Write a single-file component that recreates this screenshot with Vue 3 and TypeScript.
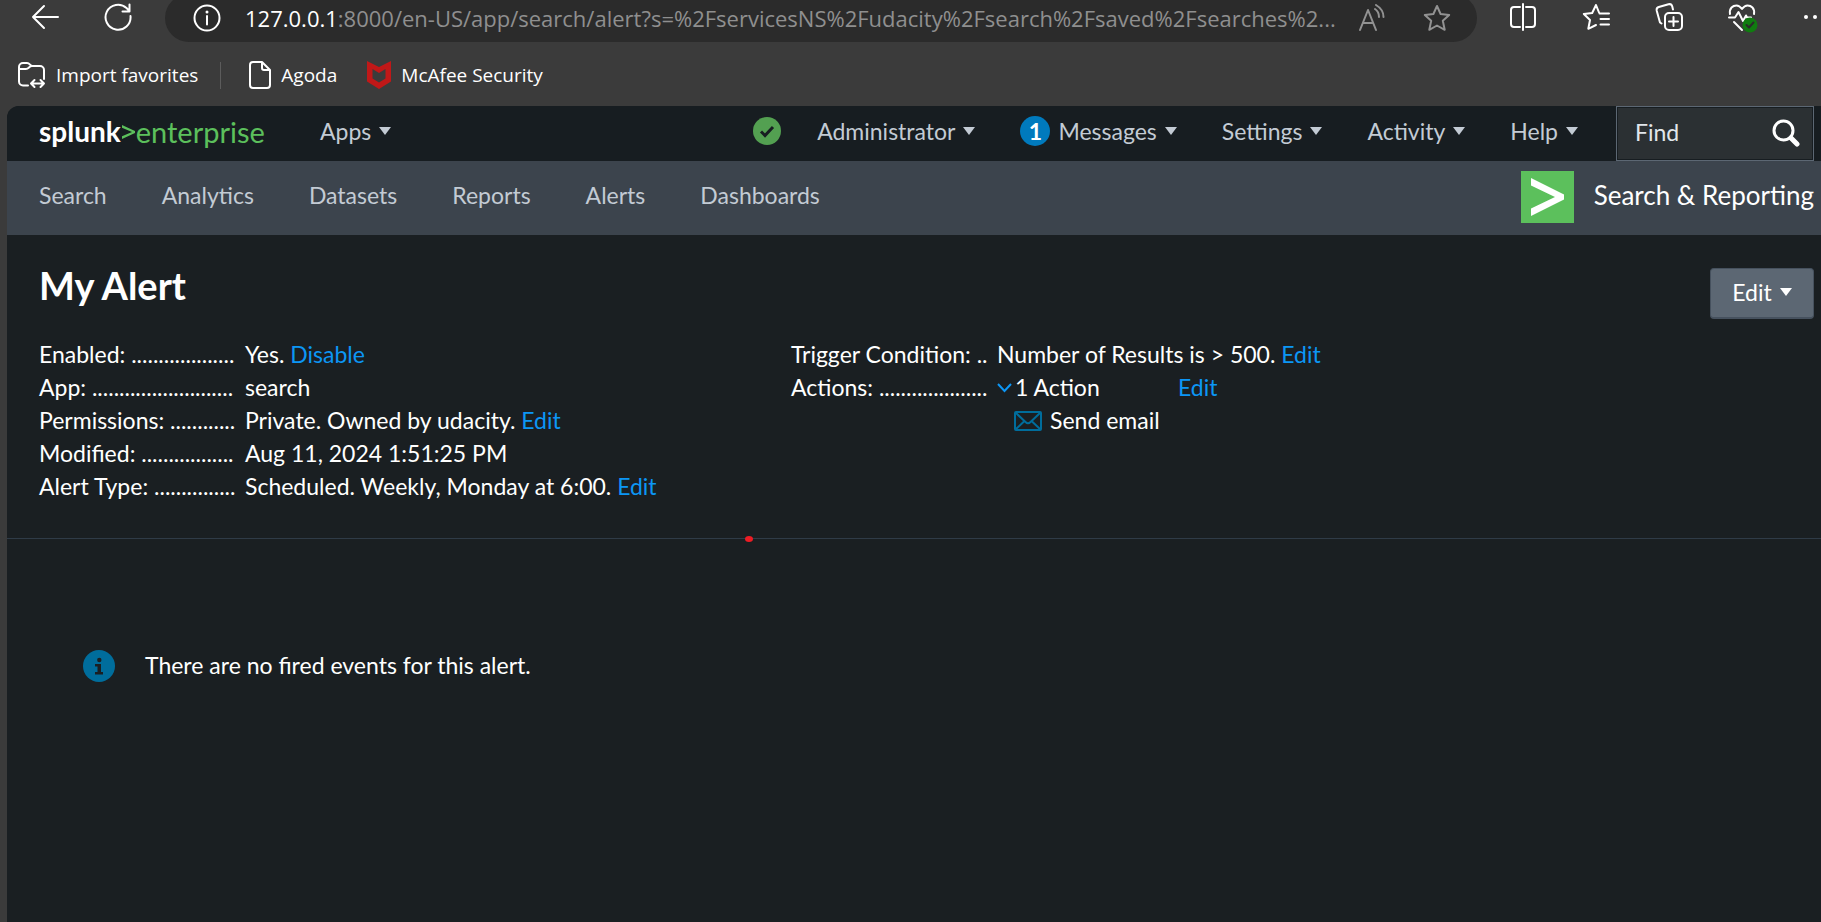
<script setup lang="ts">
import { ref } from 'vue'

interface Detail {
  label: string
  dots: number
  value: string
  action?: string
}

const host = '127.0.0.1'
const path = ':8000/en-US/app/search/alert?s=%2FservicesNS%2Fudacity%2Fsearch%2Fsaved%2Fsearches%2...'
const find = ref('')

const sections: string[] = ['Search', 'Analytics', 'Datasets', 'Reports', 'Alerts', 'Dashboards']

const details: Detail[] = [
  { label: 'Enabled:', dots: 19, value: 'Yes.', action: 'Disable' },
  { label: 'App:', dots: 26, value: 'search' },
  { label: 'Permissions:', dots: 12, value: 'Private. Owned by udacity.', action: 'Edit' },
  { label: 'Modified:', dots: 17, value: 'Aug 11, 2024 1:51:25 PM' },
  { label: 'Alert Type:', dots: 15, value: 'Scheduled. Weekly, Monday at 6:00.', action: 'Edit' },
]

const leader = (label: string, dots: number): string => `${label} ${'.'.repeat(dots)}`
</script>

<template>
  <div class="window">
    <header class="toolbar">
      <div class="nav-buttons">
        <button class="icon-button" aria-label="Back">
          <svg width="28" height="28" viewBox="0 0 28 28"><path d="M13 3 2 14l11 11M2 14h25" /></svg>
        </button>
        <button class="icon-button" aria-label="Refresh">
          <svg width="28" height="28" viewBox="0 0 28 28"><path d="M26.500 13a12.500 12.500 0 1 1-4-8l3 3M25.500 1.500V8.500H18.500" /></svg>
        </button>
      </div>
      <div class="address-bar">
        <button class="icon-button" aria-label="View site information">
          <svg width="28" height="28" viewBox="0 0 28 28"><circle cx="14" cy="14" r="12.500" /><path d="M14 12v8.500" /><circle cx="14" cy="8" r="1.500" class="solid" /></svg>
        </button>
        <div class="url"><span class="host">{{ host }}</span>{{ path }}</div>
        <button class="icon-button muted" aria-label="Read aloud">
          <svg width="28" height="28" viewBox="0 0 28 28"><path d="m2 26 8-20 8 20M5 19h10M17 5c3 2 4 5 4 8M18 1c5 3 7.500 7 7.500 12" /></svg>
        </button>
        <button class="icon-button muted" aria-label="Add to favorites">
          <svg width="28" height="28" viewBox="0 0 28 28"><path d="m14 2 3.600 8 8.600.9-6.400 5.900 1.900 9L14 21.500 6.300 25.800l1.900-9L1.800 10.900l8.600-.9z" /></svg>
        </button>
      </div>
      <div class="tools">
        <button class="icon-button" aria-label="Split screen">
          <svg width="28" height="28" viewBox="0 0 28 28"><path d="M14 1v26M11 4H5a3 3 0 0 0-3 3v14a3 3 0 0 0 3 3h6M17 4h6a3 3 0 0 1 3 3v14a3 3 0 0 1-3 3h-6" /></svg>
        </button>
        <button class="icon-button" aria-label="Favorites">
          <svg width="28" height="28" viewBox="0 0 28 28"><path d="M17 9.500 14 2l-3.800 8-8.400 1 6.200 6-1.700 8.800L14 22M17.500 10.500H27M18.500 16H27M18.500 21.500H27" /></svg>
        </button>
        <button class="icon-button" aria-label="Collections">
          <svg width="28" height="28" viewBox="0 0 28 28"><rect x="10" y="10" width="17" height="17" rx="4" /><path d="M18.500 14v9M14 18.500h9M6.500 20.500 5 19.500 1.800 8c-.5-2 .3-3.500 2-4L13.500 1.300c1.800-.5 3.200.3 3.700 2L18 6.500" /></svg>
        </button>
        <button class="icon-button" aria-label="Browser essentials">
          <svg width="30" height="30" viewBox="0 0 30 30"><path d="M2 11C1 5 5 2.500 8.500 2.500c2.500 0 4 1.500 5.500 3.500 1.500-2 3-3.500 5.500-3.500C23 2.500 27 5 26 11M1 14.500h6l3.500-5.500 4.500 9 3-5.500 1 2h4M6 19l8 8" /><circle cx="22" cy="22" r="7.500" class="badge-fill" /><path d="m18.500 22 2.500 2.500 4.500-5" class="badge-tick" /></svg>
        </button>
        <button class="icon-button" aria-label="Settings and more">
          <svg width="28" height="28" viewBox="0 0 28 28"><circle cx="3" cy="14" r="2" class="solid" /><circle cx="12" cy="14" r="2" class="solid" /><circle cx="21" cy="14" r="2" class="solid" /></svg>
        </button>
      </div>
    </header>

    <nav class="favorites" aria-label="Favorites bar">
      <a href="#" class="favorite">
        <svg width="28" height="28" viewBox="0 0 28 28"><path d="M10 24.500H5a4 4 0 0 1-4-4V6a4 4 0 0 1 4-4h4c3 0 3 3 5.500 3H22a4 4 0 0 1 4 4v9M1 8h7c3 0 3-3 6-3M13 22.500h13M16.500 19 13 22.500l3.500 3.500M22.500 19l3.500 3.500-3.500 3.500" /></svg>
        <span>Import favorites</span>
      </a>
      <span class="divider"></span>
      <a href="#" class="favorite">
        <svg width="22" height="28" viewBox="0 0 22 28"><path d="M13 1H4a3 3 0 0 0-3 3v20a3 3 0 0 0 3 3h14a3 3 0 0 0 3-3V9zV7a2 2 0 0 0 2 2h6" /></svg>
        <span>Agoda</span>
      </a>
      <a href="#" class="favorite">
        <svg width="24" height="28" viewBox="0 0 24 28"><path class="shield" d="M0 0 12 6 24 0v20.500L12 28 0 20.500zM5.500 8v9.500L12 21.500l6.500-4V8L12 12z" /></svg>
        <span>McAfee Security</span>
      </a>
    </nav>

    <main class="page">
      <div class="splunk-bar">
        <a href="#" class="logo" aria-label="splunk>enterprise"><b>splunk</b><svg width="15" height="18" viewBox="0 0 15 18"><path d="M1 3v2.800L11 10 1 14.300V17l13-6V9z" /></svg><span>enterprise</span></a>
        <button class="menu">Apps<i class="caret"></i></button>
        <div class="menus">
          <button class="health" aria-label="Health status">
            <svg width="28" height="28" viewBox="0 0 28 28"><circle cx="14" cy="14" r="14" /><path d="m8 14.500 4 4L20 10" /></svg>
          </button>
          <button class="menu">Administrator<i class="caret"></i></button>
          <button class="menu"><span class="count">1</span>Messages<i class="caret"></i></button>
          <button class="menu">Settings<i class="caret"></i></button>
          <button class="menu">Activity<i class="caret"></i></button>
          <button class="menu">Help<i class="caret"></i></button>
        </div>
        <label class="find">
          <input v-model="find" type="text" placeholder="Find" aria-label="Find" />
          <svg width="28" height="28" viewBox="0 0 28 28"><circle cx="11.500" cy="11.500" r="9.500" /><path d="m19 19 6 6" /></svg>
        </label>
      </div>

      <nav class="app-bar" aria-label="App">
        <a v-for="section in sections" :key="section" href="#" class="section">{{ section }}</a>
        <a href="#" class="app-name">
          <svg width="53" height="52" viewBox="0 0 53 52"><rect width="53" height="52" /><path d="M10 7v7.500L34 26 10 37.500V45l33-16.500v-5z" /></svg>
          <span>Search &amp; Reporting</span>
        </a>
      </nav>

      <section class="alert-head">
        <div class="title-row">
          <h1>My Alert</h1>
          <button class="edit">Edit<i class="caret"></i></button>
        </div>
        <div class="columns">
          <dl>
            <template v-for="item in details" :key="item.label">
              <dt>{{ leader(item.label, item.dots) }}</dt>
              <dd>{{ item.value }} <a v-if="item.action" href="#">{{ item.action }}</a></dd>
            </template>
          </dl>
          <dl>
            <dt>{{ leader('Trigger Condition:', 2) }}</dt>
            <dd>Number of Results is &gt; 500. <a href="#">Edit</a></dd>
            <dt>{{ leader('Actions:', 20) }}</dt>
            <dd>
              <div class="action-summary">
                <button class="toggle" aria-label="Collapse actions">
                  <svg width="15" height="12" viewBox="0 0 15 12"><path d="m1 2 6.500 7L14 2" /></svg>
                </button>
                <span class="action-count">1 Action</span>
                <a href="#">Edit</a>
              </div>
              <div class="action-item">
                <svg width="28" height="20" viewBox="0 0 28 20"><rect x="1" y="1" width="26" height="18" rx="1" /><path d="m2 2 9.500 9q2.500 2.500 5 0L26 2M2 18l8.500-8M26 18l-8.500-8" /></svg>
                <span>Send email</span>
              </div>
            </dd>
          </dl>
        </div>
        <span class="marker"></span>
      </section>

      <p class="empty">
        <svg width="32" height="32" viewBox="0 0 32 32"><circle cx="16" cy="16" r="16" /><path d="M12 14h6v8h2v2.500h-8V22h2.500v-5.500H12z" /><circle cx="16.300" cy="10" r="2.200" class="dot" /></svg>
        <span>There are no fired events for this alert.</span>
      </p>
    </main>
  </div>
</template>

<style>
body {
  margin: 0;
  background: #3b3b3b;
}
</style>

<style scoped>
* {
  box-sizing: border-box;
}

.window {
  display: flex;
  flex-direction: column;
  min-height: 100vh;
  overflow: hidden;
  background: #3b3b3b;
  color: #fff;
  font-family: "Open Sans", "Noto Sans", sans-serif;
}

button {
  padding: 0;
  border: 0;
  background: none;
  color: inherit;
  font: inherit;
}

a {
  color: inherit;
  text-decoration: none;
}

svg {
  display: block;
  flex: none;
}

/* Browser toolbar */
.toolbar {
  display: flex;
  align-items: flex-end;
  height: 42px;
  overflow: hidden;
}

.nav-buttons {
  display: flex;
  gap: 45px;
  width: 165px;
  padding: 0 0 11px 31px;
}

.tools {
  display: flex;
  align-items: flex-start;
  gap: 45px;
  height: 42px;
  padding: 3px 0 0 32px;
  margin-right: -10px;
}

.icon-button svg,
.favorite svg {
  fill: none;
  stroke: #fff;
  stroke-width: 2;
  stroke-linecap: round;
  stroke-linejoin: round;
}

.icon-button .solid {
  fill: #fff;
  stroke: none;
}

.icon-button .badge-fill {
  fill: #107c10;
  stroke: none;
}

.icon-button .badge-tick {
  stroke: #2b2b2b;
}

.icon-button.muted svg {
  stroke: #929292;
}

.address-bar {
  display: flex;
  flex: 1;
  align-items: center;
  min-width: 0;
  height: 48px;
  padding: 0 26px 0 28px;
  border-radius: 24px;
  background: #2b2b2b;
}

.url {
  flex: 1;
  min-width: 0;
  margin-left: 24px;
  color: #8f8f8f;
  font-size: 22px;
  line-height: 32px;
  white-space: nowrap;
}

.host {
  color: #fff;
}

.muted {
  margin-left: 16px;
}

.muted + .muted {
  margin-left: 37px;
}

/* Favorites bar */
.favorites {
  display: flex;
  align-items: center;
  height: 64px;
  padding: 2px 18px 0;
  font-size: 19px;
}

.favorite {
  display: flex;
  align-items: center;
  gap: 10px;
}

.favorite + .favorite {
  margin-left: 30px;
}

.favorite .shield {
  fill: #c01818;
  fill-rule: evenodd;
  stroke: none;
}

.divider {
  width: 1px;
  height: 27px;
  margin: 0 28px 0 22px;
  background: #5c5c5c;
}

/* Splunk */
.page {
  flex: 1;
  margin-left: 7px;
  border-top-left-radius: 12px;
  overflow: hidden;
  background: #1a1f22;
  font-family: Lato, "Open Sans", sans-serif;
  font-size: 23px;
  line-height: 33px;
}

.splunk-bar {
  display: flex;
  align-items: center;
  height: 55px;
  padding: 0 7px 5px 32px;
  background: #171d21;
  color: #c3cbd4;
}

.logo {
  display: flex;
  align-items: center;
  width: 281px;
  font-size: 28px;
}

.logo b {
  color: #fff;
}

.logo svg {
  fill: #5cc05c;
}

.logo span {
  color: #5cc05c;
  font-size: 29px;
}

.menu {
  display: flex;
  align-items: center;
  white-space: nowrap;
}

.caret {
  margin-left: 8px;
  border-top: 8px solid currentColor;
  border-right: 6px solid transparent;
  border-left: 6px solid transparent;
}

.menus {
  display: flex;
  gap: 45px;
  align-items: center;
  margin-left: auto;
}

.health {
  margin-right: -9px;
}

.health circle {
  fill: #53a051;
}

.health path {
  fill: none;
  stroke: #171d21;
  stroke-width: 3;
}

.count {
  width: 30px;
  height: 30px;
  margin-right: 8px;
  border-radius: 50%;
  background: #007abd;
  color: #fff;
  font-weight: 700;
  line-height: 30px;
}

.find {
  display: flex;
  align-items: center;
  align-self: flex-start;
  width: 198px;
  height: 55px;
  margin-left: 38px;
  padding: 0 13px 2px 18px;
  border: 1px solid #5c6773;
  background: #2b3033;
  box-shadow: inset 0 0 0 1px #171d21;
}

.find input {
  flex: 1;
  min-width: 0;
  padding: 0;
  border: 0;
  outline: 0;
  background: none;
  color: #e1e6eb;
  font: inherit;
}

.find input::placeholder {
  color: #e1e6eb;
  opacity: 1;
}

.find svg {
  fill: none;
  stroke: #fff;
  stroke-width: 3;
  stroke-linecap: round;
}

.find path {
  stroke-width: 5;
}

.app-bar {
  display: flex;
  gap: 55px;
  align-items: center;
  height: 74px;
  padding: 0 7px 2px 32px;
  background: #3c444d;
  color: #c3cbd4;
}

.section,
.app-name span {
  padding-bottom: 4px;
}

.app-name {
  display: flex;
  gap: 20px;
  align-items: center;
  margin-left: auto;
  color: #fff;
  font-size: 26px;
}

.app-name rect {
  fill: #5cc05c;
}

.app-name path {
  fill: #fff;
}

.alert-head {
  position: relative;
  padding: 33px 7px 35px 32px;
  border-bottom: 1px solid #2f3b47;
}

.title-row {
  display: flex;
  align-items: flex-start;
  justify-content: space-between;
  height: 70px;
}

h1 {
  margin: 0;
  font-size: 38px;
  font-weight: 700;
  line-height: 34px;
}

.edit {
  display: flex;
  align-items: center;
  justify-content: center;
  width: 104px;
  height: 51px;
  padding-bottom: 2px;
  border: 1px solid #46515e;
  border-bottom-width: 2px;
  border-radius: 4px;
  background: #5c6773;
}

.columns {
  display: grid;
  grid-template-columns: 752px 1fr;
}

dl {
  display: grid;
  grid-template-columns: 198px 1fr;
  column-gap: 8px;
  align-content: start;
  margin: 0;
}

dt {
  height: 33px;
  white-space: nowrap;
}

dd {
  margin: 0;
}

dd a {
  color: #0c96f5;
}

.action-summary,
.action-item {
  display: flex;
  align-items: center;
}

.action-count {
  width: 163px;
  margin-left: 3px;
}

.toggle svg {
  fill: none;
  stroke: #0c96f5;
  stroke-width: 2;
}

.action-item {
  gap: 8px;
  padding-left: 17px;
}

.action-item svg {
  fill: none;
  stroke: #006d9c;
  stroke-width: 2;
}

.marker {
  position: absolute;
  bottom: -4px;
  left: 40.7%;
  width: 8px;
  height: 6px;
  border-radius: 50%;
  background: #ed1c24;
}

.empty {
  display: flex;
  gap: 30px;
  align-items: center;
  margin: 0;
  padding: 110px 76px;
}

.empty svg {
  fill: #006d9c;
}

.empty path,
.empty .dot {
  fill: #1a1f22;
}
</style>
